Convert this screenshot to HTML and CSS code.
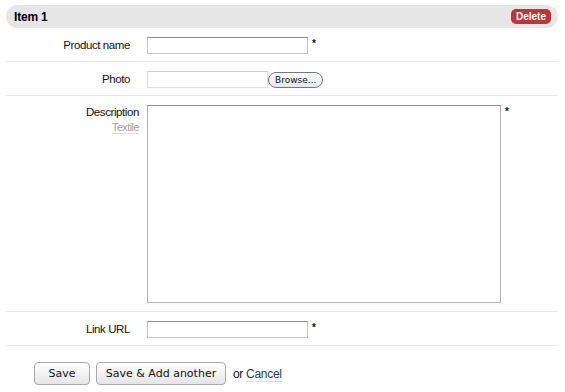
FILE: index.html
```html
<!doctype html>
<html lang="en">
    <head>
        <meta charset="UTF-8" />
        <title>Item 1</title>
        <link rel="stylesheet" href="styles.css">
    </head>
    <body>
        <div class="item">
            <div class="item-header">
                <h2 class="item-title">Item 1</h2>
                <a class="delete-btn" href="#">Delete</a>
            </div>
            <div class="form-row">
                <label class="form-label">Product name</label>
                <div class="form-field">
                    <input class="text-input" type="text" />
                    <span class="required">*</span>
                </div>
            </div>
            <div class="form-row">
                <label class="form-label">Photo</label>
                <div class="form-field">
                    <span class="file-input"></span>
                    <span class="browse-btn">Browse...</span>
                </div>
            </div>
            <div class="form-row form-row--tall">
                <div class="form-label form-label--wide">
                    <label>Description</label>
                    <a class="hint" href="#">Textile</a>
                </div>
                <div class="form-field form-field--near">
                    <textarea class="text-area"></textarea>
                    <span class="required">*</span>
                </div>
            </div>
            <div class="form-row">
                <label class="form-label">Link URL</label>
                <div class="form-field">
                    <input class="text-input" type="text" />
                    <span class="required">*</span>
                </div>
            </div>
        </div>
        <div class="actions">
            <button class="btn btn--save">Save</button>
            <button class="btn btn--another">Save &amp; Add another</button>
            <span class="or">or <a href="#" class="cancel">Cancel</a></span>
        </div>
    </body>
</html>
```

FILE: styles.css
```css
* {
    padding: 0;
    margin: 0;
    box-sizing: border-box;
}

body {
    font-family: "Liberation Sans", Arial, sans-serif;
    font-size: 12px;
    color: #111;
    background: #fff;
    padding: 5px 7px 0 6px;
}

.item-header {
    display: flex;
    align-items: center;
    justify-content: space-between;
    height: 23px;
    background: #e6e6e6;
    border-radius: 12px;
    padding: 0 7px 0 8px;
}

.item-title {
    font-size: 12px;
    font-weight: 700;
    color: #000;
    letter-spacing: -0.2px;
}

.delete-btn {
    display: inline-block;
    background: #b9373a;
    color: #fff;
    font-size: 10px;
    font-weight: 700;
    text-decoration: none;
    line-height: 15px;
    height: 15px;
    padding: 0 5px;
    border-radius: 5px;
}

.form-row {
    display: flex;
    align-items: flex-start;
    border-bottom: 1px solid #e8e8e8;
    padding: 9px 0 7px;
}

.form-row--tall {
    padding-bottom: 8px;
}

.form-label {
    width: 124px;
    text-align: right;
    color: #111;
    font-size: 11.5px;
    letter-spacing: -0.4px;
    line-height: 17px;
    flex-shrink: 0;
}

.form-label--wide {
    width: 133px;
    line-height: 14px;
}

.form-label label {
    display: block;
}

.hint {
    display: inline-block;
    color: #a0a0a0;
    font-size: 10.5px;
    text-decoration: none;
    border-bottom: 1px solid #ddd;
    line-height: 12px;
    margin-top: 2px;
}

.form-field {
    display: flex;
    align-items: flex-start;
    margin-left: 17px;
}

.form-field--near {
    margin-left: 8px;
}

.text-input {
    width: 161px;
    height: 17px;
    border: 1px solid #c4c4c4;
    border-top-color: #888;
    background: #fff;
}

.required {
    font-size: 10px;
    font-weight: 700;
    margin-left: 4px;
    line-height: 14px;
}

.file-input {
    width: 121px;
    height: 17px;
    border: 1px solid #e0e0e0;
    border-top-color: #ccc;
}

.browse-btn {
    display: inline-block;
    height: 16px;
    line-height: 14px;
    margin-top: 1px;
    padding: 0 6px;
    font-family: "DejaVu Sans", sans-serif;
    font-size: 9px;
    color: #111;
    border: 1px solid #777;
    border-radius: 8px;
    background: linear-gradient(#fff, #e6e6e6);
}

.text-area {
    width: 354px;
    height: 198px;
    border: 1px solid #b4b4b4;
    border-top-color: #888;
    resize: none;
}

.actions {
    display: flex;
    align-items: center;
    padding: 16px 0 0 28px;
}

.btn {
    height: 23px;
    font-family: "DejaVu Sans", sans-serif;
    font-size: 11px;
    color: #111;
    border: 1px solid #a9a9a9;
    border-radius: 4px;
    background: linear-gradient(#fff, #f3f3f3 50%, #e4e4e4);
}

.btn--save {
    width: 56px;
}

.btn--another {
    width: 130px;
    margin-left: 6px;
}

.or {
    margin-left: 7px;
    color: #111;
    letter-spacing: -0.3px;
}

.cancel {
    color: #243c56;
    text-decoration: none;
    border-bottom: 1px solid #dde;
}
```
